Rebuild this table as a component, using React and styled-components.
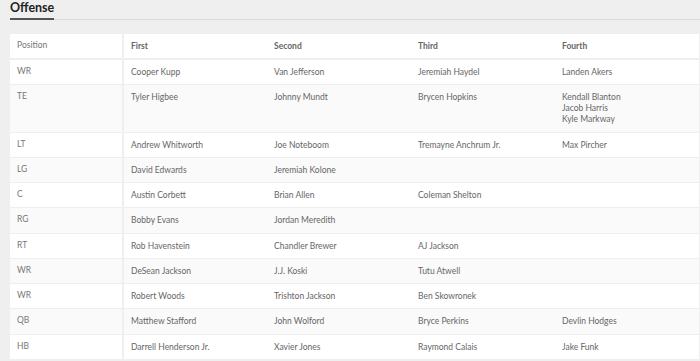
import React from 'react'
import styled, { createGlobalStyle } from 'styled-components'

const GlobalStyle = createGlobalStyle`
  html, body {
    margin: 0;
    padding: 0;
    background: #efefef;
    font-family: Lato, "Open Sans", "Liberation Sans", sans-serif;
  }
`

const depth = [
  { pos: 'WR', players: [['Cooper Kupp'], ['Van Jefferson'], ['Jeremiah Haydel'], ['Landen Akers']] },
  { pos: 'TE', players: [['Tyler Higbee'], ['Johnny Mundt'], ['Brycen Hopkins'], ['Kendall Blanton', 'Jacob Harris', 'Kyle Markway']] },
  { pos: 'LT', players: [['Andrew Whitworth'], ['Joe Noteboom'], ['Tremayne Anchrum Jr.'], ['Max Pircher']] },
  { pos: 'LG', players: [['David Edwards'], ['Jeremiah Kolone'], [], []] },
  { pos: 'C', players: [['Austin Corbett'], ['Brian Allen'], ['Coleman Shelton'], []] },
  { pos: 'RG', players: [['Bobby Evans'], ['Jordan Meredith'], [], []] },
  { pos: 'RT', players: [['Rob Havenstein'], ['Chandler Brewer'], ['AJ Jackson'], []] },
  { pos: 'WR', players: [['DeSean Jackson'], ['J.J. Koski'], ['Tutu Atwell'], []] },
  { pos: 'WR', players: [['Robert Woods'], ['Trishton Jackson'], ['Ben Skowronek'], []] },
  { pos: 'QB', players: [['Matthew Stafford'], ['John Wolford'], ['Bryce Perkins'], ['Devlin Hodges']] },
  { pos: 'HB', players: [['Darrell Henderson Jr.'], ['Xavier Jones'], ['Raymond Calais'], ['Jake Funk']] },
]

const columns = ['First', 'Second', 'Third', 'Fourth']

function App() {
  return (
    <>
      <GlobalStyle />
      <Page>
        <TitleBar>
          <Title>Offense</Title>
        </TitleBar>
        <Chart>
          <colgroup>
            <col style={{ width: 113 }} />
            {columns.map((c) => (
              <col key={c} style={{ width: 144 }} />
            ))}
          </colgroup>
          <thead>
            <tr>
              <PosHead>Position</PosHead>
              {columns.map((c) => (
                <ColHead key={c}>{c}</ColHead>
              ))}
            </tr>
          </thead>
          <tbody>
            {depth.map((row, i) => (
              <Row key={i} $striped={i % 2 === 1}>
                <PosCell>{row.pos}</PosCell>
                {row.players.map((names, j) => (
                  <Cell key={j}>
                    {names.map((n) => (
                      <div key={n}>{n}</div>
                    ))}
                  </Cell>
                ))}
              </Row>
            ))}
          </tbody>
        </Chart>
      </Page>
    </>
  )
}

const Page = styled.div`
  padding-left: 10px;
  width: 690px;
  overflow: hidden;
`

const TitleBar = styled.div`
  display: flex;
  border-bottom: 1px solid #d9d9d9;
  margin-bottom: 14px;
`

const Title = styled.h2`
  margin: 0 0 -1px 0;
  padding: 1px 0 3px 0;
  font-size: 12.5px;
  font-weight: 700;
  line-height: 14px;
  color: #222;
  border-bottom: 2px solid #555;
`

const Chart = styled.table`
  width: 689px;
  table-layout: fixed;
  border-collapse: collapse;
  background: #fff;
`

const Head = styled.th`
  text-align: left;
  vertical-align: top;
  font-size: 8.5px;
  line-height: 11px;
  height: 11px;
  border-bottom: 2px solid #eee;
`

const PosHead = styled(Head)`
  font-weight: 400;
  color: #777;
  padding: 6px 7px 7px;
  border-right: 2px solid #efefef;
`

const ColHead = styled(Head)`
  font-weight: 700;
  color: #666;
  padding: 7px 7px 6px;
`

const Row = styled.tr`
  background: ${(p) => (p.$striped ? '#fafafa' : '#fff')};
  border-bottom: 1px solid #eee;
  &:last-child {
    border-bottom: none;
  }
`

const Cell = styled.td`
  vertical-align: top;
  font-size: 8.5px;
  line-height: 11px;
  height: 11px;
  color: #666;
  padding: 7px 7px 6.25px;
  white-space: nowrap;
`

const PosCell = styled(Cell)`
  color: #777;
  padding-top: 6px;
  padding-bottom: 7.25px;
  border-right: 2px solid #efefef;
`

export default App
